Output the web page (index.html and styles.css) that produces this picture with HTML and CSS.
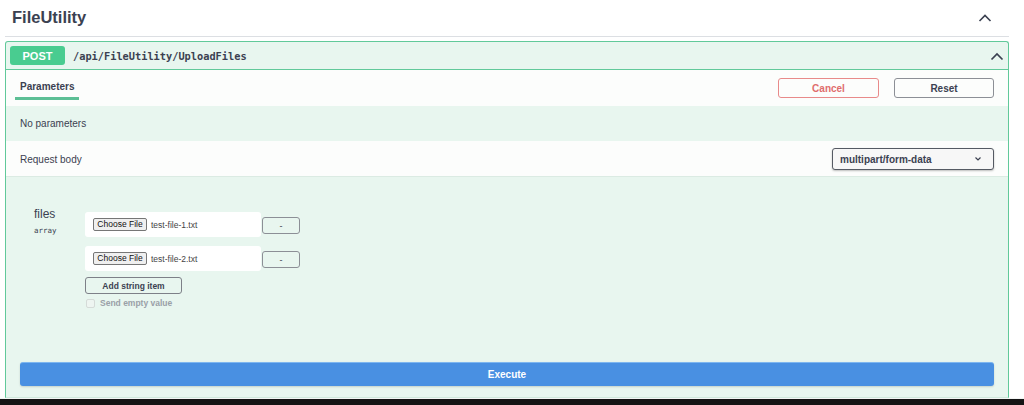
FILE: index.html
```html
<!DOCTYPE html>
<html>
<head>
<meta charset="utf-8">
<link rel="stylesheet" href="styles.css">
</head>
<body>
<div class="page">
  <div class="wrap">
    <div class="tag-head">
      <h3 class="tag-title">FileUtility</h3>
      <svg class="chev-top" width="14" height="10" viewBox="0 0 14 10"><polyline points="1.5,8 7,2.5 12.5,8" fill="none" stroke="#3b4151" stroke-width="1.6"/></svg>
    </div>
    <div class="opblock">
      <div class="summary">
        <span class="method">POST</span>
        <span class="path">/api/FileUtility/UploadFiles</span>
        <svg class="chev-sum" width="14" height="9" viewBox="0 0 14 9"><polyline points="1.5,7.5 7,2 12.5,7.5" fill="none" stroke="#3b4151" stroke-width="1.7"/></svg>
      </div>
      <div class="tab-head">
        <div class="tab">Parameters</div>
        <div class="actions">
          <button class="btn btn-cancel">Cancel</button>
          <button class="btn btn-reset">Reset</button>
        </div>
      </div>
      <div class="no-params">No parameters</div>
      <div class="rb-head">
        <span>Request body</span>
        <div class="select">
          <span>multipart/form-data</span>
          <svg width="8" height="6" viewBox="0 0 8 6"><polyline points="1.5,1.5 4,4 6.5,1.5" fill="none" stroke="#3b4151" stroke-width="1.2"/></svg>
        </div>
      </div>
      <div class="rb-body">
        <div class="param-row">
          <div class="param-name">
            <div class="pname">files</div>
            <div class="ptype">array</div>
          </div>
          <div class="param-values">
            <div class="item">
              <div class="file-box"><button class="choose">Choose File</button><span class="fname">test-file-1.txt</span></div>
              <button class="minus">-</button>
            </div>
            <div class="item">
              <div class="file-box"><button class="choose">Choose File</button><span class="fname">test-file-2.txt</span></div>
              <button class="minus">-</button>
            </div>
            <button class="add-item">Add string item</button>
            <label class="empty"><span class="cb"></span>Send empty value</label>
          </div>
        </div>
        <button class="execute">Execute</button>
      </div>
    </div>
  </div>
  <div class="taskbar"></div>
</div>
</body>
</html>
```

FILE: styles.css
```css
* { box-sizing: border-box; }
html, body { margin: 0; padding: 0; background: #fff; }
body {
  font-family: "Liberation Sans", Arial, sans-serif;
  color: #3b4151;
  width: 1024px;
  height: 405px;
  overflow: hidden;
}
.page { display: flex; flex-direction: column; height: 405px; }
.wrap { padding: 0 15px 0 5px; flex: 1; display: flex; flex-direction: column; }
.tag-head {
  height: 37px;
  display: flex;
  align-items: center;
  justify-content: space-between;
  padding: 0 17px 1px 7px;
  border-bottom: 1px solid #dcdfe3;
  margin-bottom: 4px;
}
.tag-title { margin: 0; font-size: 16.5px; font-weight: bold; color: #3b4151; }
.opblock {
  flex: 1;
  border: 1px solid #61c99a;
  border-radius: 3px 3px 0 0;
  border-bottom: 1px solid #cfe9dc;
  background: #e8f6ef;
  display: flex;
  flex-direction: column;
}
.summary {
  height: 28px;
  display: flex;
  align-items: center;
  padding: 0 4px 0 4px;
  border-bottom: 1px solid #61c99a;
}
.method {
  width: 55px;
  height: 19px;
  background: #49cc90;
  border-radius: 3px;
  color: #fff;
  font-weight: bold;
  font-size: 11px;
  display: flex;
  align-items: center;
  justify-content: center;
}
.path {
  margin-left: 8px;
  font-family: "DejaVu Sans Mono", monospace;
  font-weight: bold;
  font-size: 10.3px;
  color: #3b4151;
  flex: 1;
}
.chev-sum { margin-top: 1px; }
.tab-head {
  height: 36px;
  background: #fcfdfc;
  display: flex;
  align-items: center;
  justify-content: space-between;
  padding: 0 14px 0 9px;
}
.tab {
  align-self: flex-start;
  font-size: 10px;
  line-height: 12px;
  font-weight: bold;
  padding: 5px 6px 0 5px;
  width: 64px;
  height: 24px;
  margin-top: 6px;
  border-bottom: 3px solid #5cbf95;
  white-space: nowrap;
}
.actions { display: flex; gap: 15px; }
.btn {
  width: 101px;
  height: 20px;
  border-radius: 3px;
  background: transparent;
  font-family: "Liberation Sans", Arial, sans-serif;
  font-size: 10px;
  font-weight: bold;
  padding: 0;
}
.btn-cancel { border: 1px solid #e88a8a; color: #e06d6d; }
.btn-reset { border: 1px solid #8c8f96; color: #3b4151; width: 100px; }
.no-params {
  height: 35px;
  display: flex;
  align-items: center;
  padding-left: 14px;
  font-size: 10px;
}
.rb-head {
  height: 36px;
  background: #fcfdfc;
  display: flex;
  align-items: center;
  justify-content: space-between;
  padding: 1px 14px 0 14px;
  font-size: 10px;
  border-bottom: 1px solid #dbebe3;
}
.select {
  width: 162px;
  height: 22px;
  border: 1px solid #555a63;
  border-radius: 3px;
  background: #f7f7f7;
  box-shadow: 0 1px 2px rgba(0,0,0,.25);
  display: flex;
  align-items: center;
  justify-content: space-between;
  padding: 0 11px 0 7px;
  font-weight: bold;
  font-size: 10px;
}
.rb-body {
  flex: 1;
  display: flex;
  flex-direction: column;
  padding: 30px 14px 0 14px;
}
.param-row { display: flex; padding-left: 14px; }
.param-name { width: 51px; }
.pname { font-size: 12px; line-height: 14px; }
.ptype { font-family: "DejaVu Sans Mono", monospace; font-size: 7.5px; margin-top: 5px; }
.param-values { margin-top: 5px; display: flex; flex-direction: column; align-items: flex-start; }
.item { display: flex; align-items: center; margin-bottom: 9px; }
.item + .item { margin-bottom: 6px; }
.file-box {
  width: 176px;
  height: 25px;
  background: #fff;
  border-radius: 3px;
  display: flex;
  align-items: center;
  padding-left: 8px;
}
.choose {
  height: 13px;
  width: 54px;
  background: #efefef;
  border: 1px solid #767676;
  border-radius: 2px;
  font-family: "Liberation Sans", Arial, sans-serif;
  font-size: 8.5px;
  padding: 0;
  color: #111;
  line-height: 11px;
}
.fname { margin-left: 4px; font-size: 8.5px; color: #444; }
.minus {
  margin-left: 1px;
  width: 38px;
  height: 17px;
  border: 1px solid #8c8f96;
  border-radius: 3px;
  background: transparent;
  font-size: 9px;
  padding: 0;
  color: #3b4151;
  margin-top: 2px;
}
.add-item {
  width: 97px;
  height: 17px;
  border: 1px solid #7d8088;
  border-radius: 3px;
  background: transparent;
  font-family: "Liberation Sans", Arial, sans-serif;
  font-size: 8.5px;
  font-weight: bold;
  padding: 0;
  color: #3b4151;
}
.empty {
  display: flex;
  align-items: center;
  margin-top: 4px;
  font-size: 8.5px;
  color: #9aa0a7;
  font-weight: bold;
}
.cb {
  width: 9px;
  height: 9px;
  border: 1px solid #d5dbd8;
  border-radius: 2px;
  background: #eef5f1;
  margin: 0 5px 0 1px;
}
.execute {
  margin-top: auto;
  margin-bottom: 11px;
  height: 24px;
  width: 974px;
  background: #4990e2;
  border: none;
  border-top: 1px solid #7db6f0;
  border-radius: 3px;
  color: #fff;
  font-family: "Liberation Sans", Arial, sans-serif;
  font-weight: bold;
  font-size: 10px;
  box-shadow: 0 1px 2px rgba(0,0,0,.15);
}
.taskbar { height: 7px; background: #141414; border-top: 1px solid #f3f5f4; }
```
